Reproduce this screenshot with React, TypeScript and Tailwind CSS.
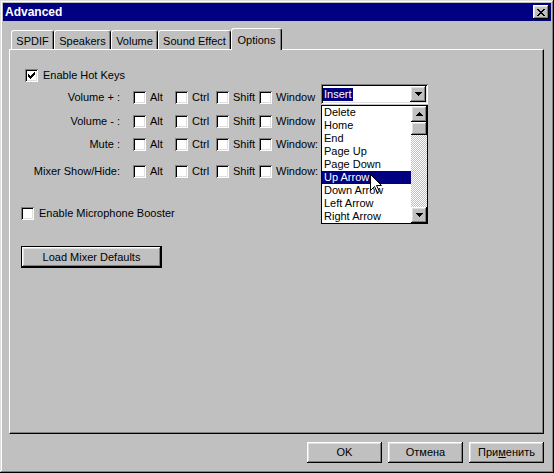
import React from "react"

const raised = "shadow-[inset_-1px_-1px_#000,inset_1px_1px_#fff,inset_-2px_-2px_#808080,inset_2px_2px_#dfdfdf]"
const sunken = "shadow-[inset_1px_1px_#808080,inset_-1px_-1px_#fff,inset_2px_2px_#000,inset_-2px_-2px_#dfdfdf]"

function CheckBox({ checked = false }: { checked?: boolean }) {
  return (
    <span className={`w-[13px] h-[13px] shrink-0 bg-white flex items-center justify-center ${sunken}`}>
      {checked && (
        <svg width="7" height="7" viewBox="0 0 7 7" shapeRendering="crispEdges">
          <rect x="6" y="0" width="1" height="1" />
          <rect x="5" y="1" width="2" height="1" />
          <rect x="0" y="2" width="1" height="1" />
          <rect x="4" y="2" width="3" height="1" />
          <rect x="0" y="3" width="2" height="1" />
          <rect x="3" y="3" width="3" height="1" />
          <rect x="0" y="4" width="5" height="1" />
          <rect x="1" y="5" width="3" height="1" />
          <rect x="2" y="6" width="1" height="1" />
        </svg>
      )}
    </span>
  )
}

function Arrow({ up = false }: { up?: boolean }) {
  return (
    <svg width="7" height="4" viewBox="0 0 7 4" shapeRendering="crispEdges" className={up ? "rotate-180" : ""}>
      <rect x="0" y="0" width="7" height="1" />
      <rect x="1" y="1" width="5" height="1" />
      <rect x="2" y="2" width="3" height="1" />
      <rect x="3" y="3" width="1" height="1" />
    </svg>
  )
}

function Key({ w, text }: { w: string; text: string }) {
  return (
    <div className={`flex items-center gap-[4px] shrink-0 ${w}`}>
      <CheckBox />
      <span className="whitespace-nowrap">{text}</span>
    </div>
  )
}

function HotKeyRow({ label, mt, last, children }: { label: string; mt: string; last: string; children?: React.ReactNode }) {
  return (
    <div className={`flex items-center h-[13px] ${mt}`}>
      <span className="w-[99px] mr-[13px] text-right whitespace-nowrap shrink-0">{label}</span>
      <Key w="w-[42px]" text="Alt" />
      <Key w="w-[41px]" text="Ctrl" />
      <Key w="w-[43px]" text="Shift" />
      <Key w="w-[62px]" text={last} />
      {children}
    </div>
  )
}

const keys = ["Delete", "Home", "End", "Page Up", "Page Down", "Up Arrow", "Down Arrow", "Left Arrow", "Right Arrow"]

function Combo() {
  return (
    <div className="relative z-20 w-[107px] h-[20px] mb-[7px] shrink-0">
      <div className={`w-full h-full bg-white flex items-center pl-[2px] pr-[2px] ${sunken}`}>
        <span className="bg-[#000080] text-white px-[1px] leading-[13px]">Insert</span>
        <div className={`ml-auto w-[16px] h-[16px] bg-[#c0c0c0] flex items-center justify-center ${raised}`}>
          <Arrow />
        </div>
      </div>
      <div className="absolute left-0 top-[21px] w-[107px] h-[119px] border border-black bg-white flex">
        <div className="flex-1 flex flex-col">
          {keys.map((k) => (
            <div
              key={k}
              className={`h-[13px] leading-[13px] pl-[2px] whitespace-nowrap ${k === "Up Arrow" ? "bg-[#000080] text-white" : ""}`}
            >
              {k}
            </div>
          ))}
        </div>
        <div className="w-[16px] flex flex-col">
          <div className={`h-[16px] bg-[#c0c0c0] flex items-center justify-center ${raised}`}>
            <Arrow up />
          </div>
          <div className={`h-[13px] bg-[#c0c0c0] ${raised}`} />
          <div className="flex-1 bg-[repeating-conic-gradient(#c0c0c0_0_25%,#fff_0_50%)] bg-[length:2px_2px]" />
          <div className={`h-[16px] bg-[#c0c0c0] flex items-center justify-center ${raised}`}>
            <Arrow />
          </div>
        </div>
        <svg className="absolute left-[48px] top-[68px]" width="13" height="20" viewBox="0 0 13 20">
          <path d="M0.5 0.5 V16.5 L4.5 12.5 L7.5 18.5 L9.5 17.5 L6.5 11.5 H11.5 Z" fill="#fff" stroke="#000" strokeWidth="1" />
        </svg>
      </div>
    </div>
  )
}

function Tab({ label, w, active = false }: { label: string; w: string; active?: boolean }) {
  if (active) {
    return (
      <div className={`${w} h-[22px] -mb-[1px] bg-[#c0c0c0] border-t border-l border-white border-r border-r-black rounded-t-[3px] shadow-[inset_-1px_0_#808080] flex justify-center pt-[3px] shrink-0`}>
        {label}
      </div>
    )
  }
  return (
    <div className={`${w} h-[19px] bg-[#c0c0c0] border-t border-l border-white border-r border-r-black rounded-t-[3px] shadow-[inset_-1px_0_#808080] flex items-center justify-center pt-[2px] shrink-0`}>
      {label}
    </div>
  )
}

export default function App() {
  return (
    <div className="w-[554px] h-[473px] bg-[#c0c0c0] p-[3px] flex flex-col shadow-[inset_-1px_-1px_#000,inset_1px_1px_#dfdfdf,inset_-2px_-2px_#808080,inset_2px_2px_#fff] font-['Liberation_Sans',Arial,sans-serif] text-[11px] text-black select-none">
      <div className="h-[18px] bg-[#000080] flex items-center justify-between pl-[2px] pr-[2px] shrink-0">
        <span className="text-white font-bold text-[12px]">Advanced</span>
        <div className={`w-[16px] h-[14px] bg-[#c0c0c0] flex items-center justify-center ${raised}`}>
          <svg width="8" height="7" viewBox="0 0 8 7" shapeRendering="crispEdges">
            <rect x="0" y="0" width="2" height="1" />
            <rect x="6" y="0" width="2" height="1" />
            <rect x="1" y="1" width="2" height="1" />
            <rect x="5" y="1" width="2" height="1" />
            <rect x="2" y="2" width="4" height="1" />
            <rect x="3" y="3" width="2" height="1" />
            <rect x="2" y="4" width="4" height="1" />
            <rect x="1" y="5" width="2" height="1" />
            <rect x="5" y="5" width="2" height="1" />
            <rect x="0" y="6" width="2" height="1" />
            <rect x="6" y="6" width="2" height="1" />
          </svg>
        </div>
      </div>

      <div className="flex-1 flex flex-col pl-[6px] pr-[7px] pt-[7px] pb-[7px]">
        <div className="flex items-end h-[21px] pl-[2px] relative z-10 shrink-0">
          <Tab label="SPDIF" w="w-[43px]" />
          <Tab label="Speakers" w="w-[57px]" />
          <Tab label="Volume" w="w-[47px]" />
          <Tab label="Sound Effect" w="w-[73px]" />
          <Tab label="Options" w="w-[51px]" active />
        </div>

        <div className="flex-1 border border-t-white border-l-white border-r-black border-b-black shadow-[inset_-1px_-1px_#808080] pt-[19px] pl-[11px] flex flex-col">
          <div className="flex items-center ml-[4px] h-[13px] gap-[5px]">
            <CheckBox checked />
            <span>Enable Hot Keys</span>
          </div>
          <HotKeyRow label="Volume + :" mt="mt-[9px]" last="Window">
            <Combo />
          </HotKeyRow>
          <HotKeyRow label="Volume - :" mt="mt-[11px]" last="Window" />
          <HotKeyRow label="Mute :" mt="mt-[10px]" last="Window:" />
          <HotKeyRow label="Mixer Show/Hide:" mt="mt-[14px]" last="Window:" />

          <div className="flex items-center h-[13px] gap-[5px] mt-[29px]">
            <CheckBox />
            <span>Enable Microphone Booster</span>
          </div>

          <button className={`mt-[26px] w-[141px] h-[22px] border border-black bg-[#c0c0c0] flex items-center justify-center ${raised}`}>
            Load Mixer Defaults
          </button>
        </div>

        <div className="flex justify-end gap-[6px] mt-[8px] shrink-0">
          <button className={`w-[75px] h-[21px] bg-[#c0c0c0] flex items-center justify-center ${raised}`}>OK</button>
          <button className={`w-[75px] h-[21px] bg-[#c0c0c0] flex items-center justify-center ${raised}`}>Отмена</button>
          <button className={`w-[75px] h-[21px] bg-[#c0c0c0] flex items-center justify-center ${raised}`}>
            При<span className="underline">м</span>енить
          </button>
        </div>
      </div>
    </div>
  )
}
